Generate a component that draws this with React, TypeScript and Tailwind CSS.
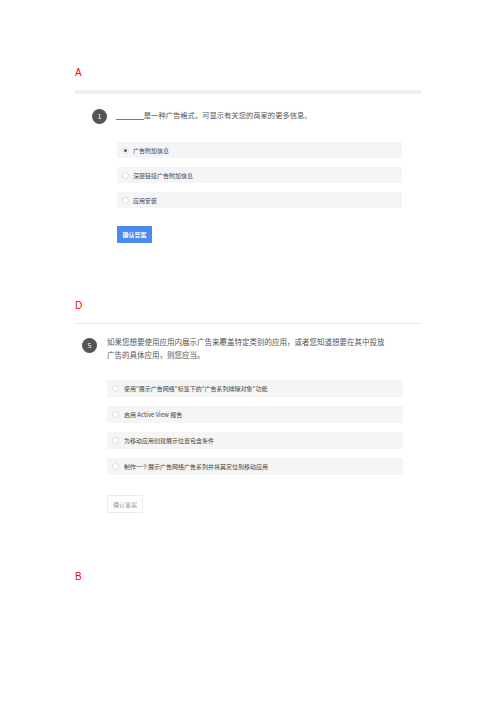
const font = { fontFamily: '"Noto Sans CJK SC", "Noto Sans", sans-serif' };

type Opt = { label: React.ReactNode; checked?: boolean };

function Radio({ checked }: { checked?: boolean }) {
  return (
    <span className="flex h-[7px] w-[7px] shrink-0 items-center justify-center rounded-full border border-[#dcdcdc] bg-white">
      {checked && <span className="h-[3px] w-[3px] rounded-full bg-[#555]" />}
    </span>
  );
}

function Options({ items }: { items: Opt[] }) {
  return (
    <div className="flex w-[296px] flex-col gap-[9px]">
      {items.map((o, i) => (
        <div key={i} className="flex h-[17px] items-center gap-[5px] bg-[#f5f5f5] pl-[5px] text-[6px] text-[#444]">
          <Radio checked={o.checked} />
          <span>{o.label}</span>
        </div>
      ))}
    </div>
  );
}

export default function App() {
  return (
    <div className="h-[702px] w-[496px] bg-white pl-[75px] pt-[67px]" style={font}>
      <div className="w-[346px]">
        {/* A */}
        <div className="h-[12px] text-[10px] leading-[12px] text-[#ff0000]" style={{ fontFamily: '"Liberation Sans", sans-serif' }}>A</div>
        <div className="mt-[11px] h-[4px] bg-[#efefef]" />
        <div className="mt-[15px] flex items-start">
          <div className="ml-[17px] flex h-[15px] w-[15px] shrink-0 items-center justify-center rounded-full bg-[#555] text-[7px] text-white">1</div>
          <div className="ml-[9px] mt-[-1px] text-[7.3px] leading-[14px] text-[#555]">
            <span className="underline decoration-[#777]">{'\u00a0'.repeat(17)}</span>是一种广告格式，可显示有关您的商家的更多信息。
          </div>
        </div>
        <div className="ml-[42px] mt-[18px] w-[285px]">
          <div className="flex flex-col gap-[9px]">
            {[
              { label: '广告附加信息', checked: true },
              { label: '深层链接广告附加信息' },
              { label: '应用安装' },
            ].map((o, i) => (
              <div key={i} className="flex h-[16px] items-center gap-[4px] bg-[#f5f5f5] pl-[5px] text-[6px] text-[#444]">
                <Radio checked={o.checked} />
                <span>{o.label}</span>
              </div>
            ))}
          </div>
          <button className="mt-[18px] flex h-[17px] w-[35px] items-center justify-center bg-[#4d8af0] text-[6px] font-bold text-white">
            确认答案
          </button>
        </div>

        {/* D */}
        <div className="mt-[57px] h-[12px] text-[10px] leading-[12px] text-[#ff0000]" style={{ fontFamily: '"Liberation Sans", sans-serif' }}>D</div>
        <div className="mt-[11px] h-px bg-[#e6e6e6]" />
        <div className="mt-[14px] flex items-start">
          <div className="ml-[7px] flex h-[15px] w-[15px] shrink-0 items-center justify-center rounded-full bg-[#555] text-[7px] text-white">5</div>
          <div className="ml-[10px] mt-[-3px] text-[7.5px] leading-[13px] text-[#555]">
            如果您想要使用应用内展示广告来覆盖特定类别的应用，或者您知道想要在其中投放
            <br />
            广告的具体应用，则您应当。
          </div>
        </div>
        <div className="ml-[32px] mt-[19px]">
          <Options
            items={[
              { label: '使用"展示广告网络"标签下的"广告系列排除对象"功能' },
              { label: '启用 Active View 报告' },
              { label: '为移动应用创建展示位置包含条件' },
              { label: '制作一个展示广告网络广告系列并将其定位到移动应用' },
            ]}
          />
          <button className="mt-[20px] flex h-[18px] w-[36px] items-center justify-center border border-[#ececec] bg-white text-[6px] text-[#999]">
            确认答案
          </button>
        </div>

        {/* B */}
        <div className="mt-[58px] h-[12px] text-[10px] leading-[12px] text-[#ff0000]" style={{ fontFamily: '"Liberation Sans", sans-serif' }}>B</div>
      </div>
    </div>
  );
}
